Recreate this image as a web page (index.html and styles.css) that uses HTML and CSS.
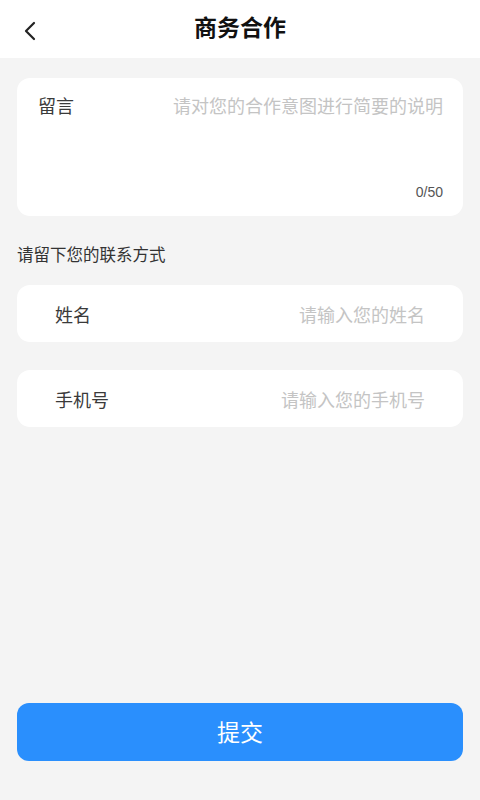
FILE: index.html
```html
<!DOCTYPE html>
<html lang="zh">
<head>
<meta charset="utf-8">
<title>商务合作</title>
<link rel="stylesheet" href="styles.css">
</head>
<body>
<div class="page">
  <header class="header">
    <span class="back">
      <svg width="14" height="20" viewBox="0 0 14 20"><path d="M11 2 L3 10 L11 18" fill="none" stroke="#222" stroke-width="2.2" stroke-linecap="round" stroke-linejoin="round"/></svg>
    </span>
    <h1 class="title">商务合作</h1>
  </header>
  <main class="content">
    <section class="card message">
      <div class="msg-row">
        <span class="label">留言</span>
        <span class="placeholder">请对您的合作意图进行简要的说明</span>
      </div>
      <div class="counter">0/50</div>
    </section>
    <p class="section-title">请留下您的联系方式</p>
    <section class="card field">
      <span class="label">姓名</span>
      <span class="placeholder">请输入您的姓名</span>
    </section>
    <section class="card field">
      <span class="label">手机号</span>
      <span class="placeholder">请输入您的手机号</span>
    </section>
    <div class="spacer"></div>
    <button class="submit">提交</button>
  </main>
</div>
</body>
</html>
```
FILE: styles.css
```css
* { box-sizing: border-box; }
html, body { margin: 0; padding: 0; }
body {
  width: 480px;
  height: 800px;
  background: #f4f4f4;
  font-family: "Noto Sans CJK SC", "Noto Sans", sans-serif;
  overflow: hidden;
}
.page {
  display: flex;
  flex-direction: column;
  height: 800px;
}
.header {
  position: relative;
  height: 58px;
  background: #fff;
  display: flex;
  align-items: center;
  justify-content: center;
}
.back {
  position: absolute;
  left: 23px;
  top: 21px;
  width: 14px;
  height: 20px;
  display: flex;
}
.title {
  margin: 0 0 5px;
  font-size: 23px;
  font-weight: 700;
  color: #111;
  line-height: 1;
}
.content {
  flex: 1;
  display: flex;
  flex-direction: column;
  padding: 20px 17px 39px;
}
.card {
  background: #fff;
  border-radius: 13px;
}
.message {
  height: 138px;
  padding: 15px 20px 16px 21px;
  display: flex;
  flex-direction: column;
  justify-content: space-between;
}
.msg-row {
  display: flex;
  justify-content: space-between;
  align-items: center;
}
.label {
  font-size: 18px;
  color: #3a3a3a;
  line-height: 24px;
}
.placeholder {
  font-size: 18px;
  color: #c4c4c4;
  line-height: 24px;
}
.counter {
  align-self: flex-end;
  font-family: "Liberation Sans", Arial, sans-serif;
  font-size: 14px;
  color: #555;
  line-height: 16px;
}
.section-title {
  margin: 28px 0 0;
  font-size: 16.5px;
  color: #333;
  line-height: 20px;
}
.field {
  height: 57px;
  margin-top: 21px;
  padding: 0 38px;
  display: flex;
  justify-content: space-between;
  align-items: center;
}
.field + .field { margin-top: 28px; }
.spacer { flex: 1; }
.submit {
  height: 58px;
  border: none;
  border-radius: 12px;
  background: #2a8ffd;
  color: #fff;
  font-family: "Noto Sans CJK SC", "Noto Sans", sans-serif;
  font-size: 23px;
  width: 100%;
  padding: 0 0 2px;
}
```
